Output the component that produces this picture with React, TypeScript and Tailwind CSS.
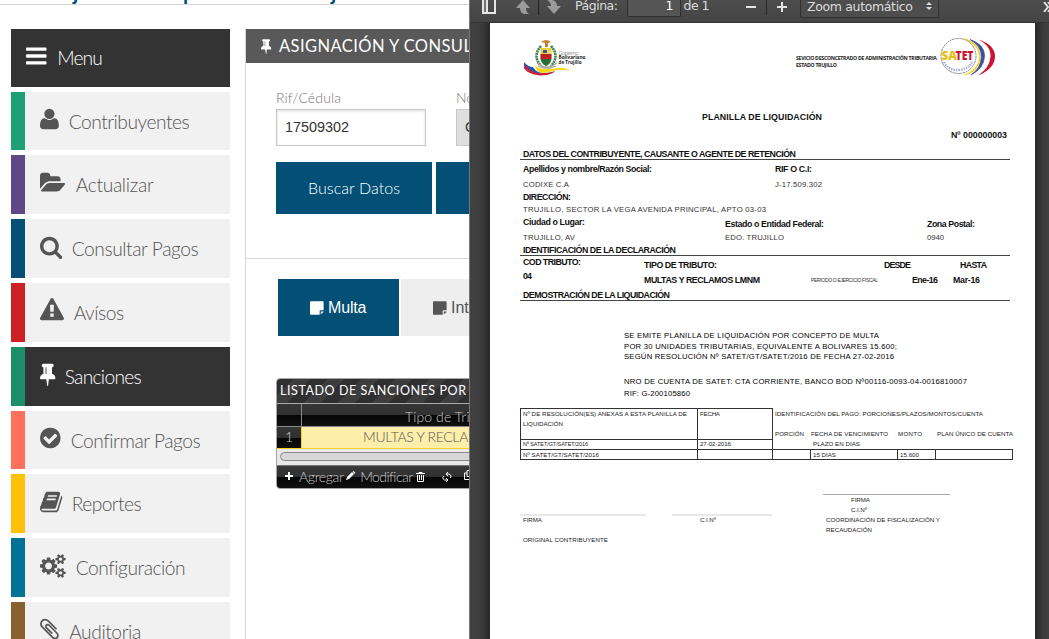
import React, { useLayoutEffect, useRef } from 'react';

/** Text run whose glyphs are spread to fill a given advance width, like a PDF text layer does. */
function Fit({ w, className = '', children }: { w: number; className?: string; children: string }) {
  const ref = useRef<HTMLSpanElement>(null);
  useLayoutEffect(() => {
    const el = ref.current;
    if (!el) return;
    el.style.letterSpacing = '0.001px';
    const natural = el.getBoundingClientRect().width;
    el.style.letterSpacing = `${(w - natural) / Math.max(1, children.length - 1)}px`;
  }, [w, children]);
  return (
    <span ref={ref} className={`block shrink-0 whitespace-pre ${className}`}>
      {children}
    </span>
  );
}

const P = {
  bars: 'M1664 1344v128q0 26-19 45t-45 19h-1408q-26 0-45-19t-19-45v-128q0-26 19-45t45-19h1408q26 0 45 19t19 45zm0-512v128q0 26-19 45t-45 19h-1408q-26 0-45-19t-19-45v-128q0-26 19-45t45-19h1408q26 0 45 19t19 45zm0-512v128q0 26-19 45t-45 19h-1408q-26 0-45-19t-19-45v-128q0-26 19-45t45-19h1408q26 0 45 19t19 45z',
  user: 'M1600 1405q0 120-73 189.5t-194 69.5h-874q-121 0-194-69.5t-73-189.5q0-53 3.5-103.5t14-109 26.5-108.5 43-97.5 62-81 85.5-53.5 111.5-20q9 0 42 21.5t74.5 48 108 48 133.5 21.5 133.5-21.5 108-48 74.5-48 42-21.5q61 0 111.5 20t85.5 53.5 62 81 43 97.5 26.5 108.5 14 109 3.5 103.5zm-320-893q0 159-112.5 271.5t-271.5 112.5-271.5-112.5-112.5-271.5 112.5-271.5 271.5-112.5 271.5 112.5 112.5 271.5z',
  folder: 'M1879 952q0 31-31 66l-336 396q-43 51-120.5 86.5t-143.5 35.5h-1088q-34 0-60.5-13t-26.5-43q0-31 31-66l336-396q43-51 120.5-86.5t143.5-35.5h1088q34 0 60.5 13t26.5 43zm-343-344v160h-832q-94 0-197 47.5t-164 119.5l-337 396-5 6q0-4-.5-12.5t-.5-12.5v-960q0-92 66-158t158-66h320q92 0 158 66t66 158v32h544q92 0 158 66t66 158z',
  search: 'M1216 832q0-185-131.5-316.5t-316.5-131.5-316.5 131.5-131.5 316.5 131.5 316.5 316.5 131.5 316.5-131.5 131.5-316.5zm512 832q0 52-38 90t-90 38q-54 0-90-38l-343-342q-179 124-399 124-143 0-273.5-55.5t-225-150-150-225-55.5-273.5 55.5-273.5 150-225 225-150 273.5-55.5 273.5 55.5 225 150 150 225 55.5 273.5q0 220-124 399l343 343q37 37 37 90z',
  warning: 'M1024 1375v-190q0-14-9.5-23.5t-22.5-9.5h-192q-13 0-22.5 9.5t-9.5 23.5v190q0 14 9.5 23.5t22.5 9.5h192q13 0 22.5-9.5t9.5-23.5zm-2-374l18-459q0-12-10-19-13-11-24-11h-220q-11 0-24 11-10 7-10 21l17 457q0 10 10 16.5t24 6.5h185q14 0 23.5-6.5t10.5-16.5zm-14-934l768 1408q35 63-2 126-17 29-46.5 46t-63.5 17h-1536q-34 0-63.5-17t-46.5-46q-37-63-2-126l768-1408q17-31 47-49t65-18 65 18 47 49z',
  pin: 'M800 864v-448q0-14-9-23t-23-9-23 9-9 23v448q0 14 9 23t23 9 23-9 9-23zm672 352q0 26-19 45t-45 19h-429l-51 483q-2 12-10.5 20.5t-20.5 8.5h-1q-27 0-32-27l-76-485h-404q-26 0-45-19t-19-45q0-123 78.5-221.5t177.5-98.5v-512q-52 0-90-38t-38-90 38-90 90-38h640q52 0 90 38t38 90-38 90-90 38v512q99 0 177.5 98.5t78.5 221.5z',
  check: 'M1412 734q0-28-18-46l-91-90q-19-19-45-19t-45 19l-408 407-226-226q-19-19-45-19t-45 19l-91 90q-18 18-18 46 0 27 18 45l362 362q19 19 45 19 27 0 46-19l543-543q18-18 18-45zm252 162q0 209-103 385.5t-279.5 279.5-385.5 103-385.5-103-279.5-279.5-103-385.5 103-385.5 279.5-279.5 385.5-103 385.5 103 279.5 279.5 103 385.5z',
  book: 'M1703 478q40 57 18 129l-275 906q-19 64-76.5 107.5t-122.5 43.5h-923q-77 0-148.5-53.5t-99.5-131.5q-24-67-2-127 0-4 3-27t4-37q1-8-3-21.5t-3-19.5q2-11 8-21t16.5-23.5 16.5-23.5q23-38 45-91.5t30-91.5q3-10 .5-30t-.5-28q3-11 17-28t17-23q21-36 42-92t25-90q1-9-2.5-32t.5-28q4-13 22-30.5t22-22.5q19-26 42.5-84.5t27.5-96.5q1-8-3-25.5t-2-26.5q2-8 9-18t18-23 17-21q8-12 16.5-30.5t15-35 16-36 19.5-32 26.5-23.5 36-11.5 47.5 5.5l-1 3q38-9 51-9h761q74 0 114 56t18 130l-274 906q-36 119-71.5 153.5t-128.5 34.5h-869q-27 0-38 15-11 16-1 43 24 70 144 70h923q29 0 56-15.5t35-41.5l300-987q7-22 5-57 38 15 59 43zm-1064 2q-4 13 2 22.5t20 9.5h608q13 0 25.5-9.5t16.5-22.5l21-64q4-13-2-22.5t-20-9.5h-608q-13 0-25.5 9.5t-16.5 22.5zm-83 256q-4 13 2 22.5t20 9.5h608q13 0 25.5-9.5t16.5-22.5l21-64q4-13-2-22.5t-20-9.5h-608q-13 0-25.5 9.5t-16.5 22.5z',
  cogs: 'M896 896q0-106-75-181t-181-75-181 75-75 181 75 181 181 75 181-75 75-181zm768 512q0-52-38-90t-90-38-90 38-38 90q0 53 37.5 90.5t90.5 37.5 90.5-37.5 37.5-90.5zm0-1024q0-52-38-90t-90-38-90 38-38 90q0 53 37.5 90.5t90.5 37.5 90.5-37.5 37.5-90.5zm-384 421v185q0 10-7 19.5t-16 10.5l-155 24q-11 35-32 76 34 48 90 115 7 10 7 20 0 12-7 19-23 30-82.5 89.5t-78.5 59.5q-11 0-21-7l-115-90q-37 19-77 31-11 108-23 155-7 24-30 24h-186q-11 0-20-7.5t-10-17.5l-23-153q-34-10-75-31l-118 89q-7 7-20 7-11 0-21-8-144-133-144-160 0-9 7-19 10-14 41-53t47-61q-23-44-35-82l-152-24q-10-1-17-9.5t-7-19.5v-185q0-10 7-19.5t16-10.5l155-24q11-35 32-76-34-48-90-115-7-11-7-20 0-12 7-20 22-30 82-89t79-59q11 0 21 7l115 90q34-18 77-32 11-108 23-154 7-24 30-24h186q11 0 20 7.5t10 17.5l23 153q34 10 75 31l118-89q8-7 20-7 11 0 21 8 144 133 144 160 0 9-7 19-12 16-42 54t-45 60q23 48 34 82l152 23q10 2 17 10.5t7 19.5zm640 533v140q0 16-149 31-12 27-30 52 51 113 51 138 0 4-4 7-122 71-124 71-8 0-46-47t-52-68q-20 2-30 2t-30-2q-14 21-52 68t-46 47q-2 0-124-71-4-3-4-7 0-25 51-138-18-25-30-52-149-15-149-31v-140q0-16 149-31 13-29 30-52-51-113-51-138 0-4 4-7 4-2 35-20t59-34 30-16q8 0 46 46.5t52 67.5q20-2 30-2t30 2q51-71 92-112l6-2q4 0 124 70 4 3 4 7 0 25-51 138 17 23 30 52 149 15 149 31zm0-1024v140q0 16-149 31-12 27-30 52 51 113 51 138 0 4-4 7-122 71-124 71-8 0-46-47t-52-68q-20 2-30 2t-30-2q-14 21-52 68t-46 47q-2 0-124-71-4-3-4-7 0-25 51-138-18-25-30-52-149-15-149-31v-140q0-16 149-31 13-29 30-52-51-113-51-138 0-4 4-7 4-2 35-20t59-34 30-16q8 0 46 46.5t52 67.5q20-2 30-2t30 2q51-71 92-112l6-2q4 0 124 70 4 3 4 7 0 25-51 138 17 23 30 52 149 15 149 31z',
  clip: 'M1596 1385q0 117-79 196t-196 79q-135 0-235-100l-777-776q-113-115-113-271 0-159 110-270t269-111q158 0 273 113l605 606q10 10 10 22 0 16-30.5 46.5t-46.5 30.5q-13 0-23-10l-606-607q-79-77-181-77-106 0-179 75t-73 181q0 105 76 181l776 777q63 63 145 63 64 0 106-42t42-106q0-82-63-145l-581-581q-26-24-60-24-29 0-48 19t-19 48q0 32 25 59l410 410q10 10 10 22 0 16-31 47t-47 31q-12 0-22-10l-410-410q-63-61-63-149 0-82 57-139t139-57q88 0 149 63l581 581q100 98 100 235z',
  note: 'M1216 1248v416h-992q-40 0-68-28t-28-68v-1344q0-40 28-68t68-28h1344q40 0 68 28t28 68v928h-352q-40 0-68 28t-28 68zm128 32h316q-10 54-46 92l-178 178q-34 36-92 46z',
};

function Glyph({ d, x = 0, className }: { d: string; x?: number; className: string }) {
  return (
    <svg viewBox={`${x} 0 1920 1792`} className={`shrink-0 overflow-visible fill-current ${className}`}>
      <path d={d} />
    </svg>
  );
}

const items = [
  { label: 'Contribuyentes', w: 121, icon: P.user, x: 192, bar: 'bg-[#1f9f75]', pad: 'ml-[3px]' },
  { label: 'Actualizar', w: 78, icon: P.folder, x: 0, bar: 'bg-[#5e4886]', pad: 'ml-[10px]' },
  { label: 'Consultar Pagos', w: 127, icon: P.search, x: 64, bar: 'bg-[#034f75]', pad: 'ml-[6px]' },
  { label: 'Avísos', w: 50.5, icon: P.warning, x: 0, bar: 'bg-[#cc2024]', pad: 'ml-[8px]' },
  { label: 'Sanciones', w: 77, icon: P.pin, x: 320, bar: 'bg-[#1c8e69]', pad: '-ml-[1px]', active: true },
  { label: 'Confirmar Pagos', w: 130, icon: P.check, x: 128, bar: 'bg-[#ff715b]', pad: 'ml-[5px]' },
  { label: 'Reportes', w: 70, icon: P.book, x: 64, bar: 'bg-[#ffc107]', pad: 'ml-[6px]' },
  { label: 'Configuración', w: 110, icon: P.cogs, x: 0, bar: 'bg-[#007298]', pad: 'ml-[10px]' },
  { label: 'Auditoria', w: 72, icon: P.clip, x: 192, bar: 'bg-[#896030]', pad: 'ml-[3.500px]' },
];

function Sidebar() {
  return (
    <nav className="flex w-[219px] shrink-0 flex-col gap-[5px] text-[19.2px] leading-none font-light">
      <div className="flex h-[58px] shrink-0 items-center bg-[#333333] pl-[15px] text-white">
        <Glyph d={P.bars} x={128} className="mb-1 h-6 w-[25.7px]" />
        <Fit w={45.5} className="mt-px ml-[5.5px]">Menu</Fit>
      </div>
      {items.map((it) => (
        <div
          key={it.label}
          className={`flex h-[58.8px] shrink-0 items-center ${it.active ? 'bg-[#333333] text-white' : 'bg-[#f1f1f1] text-[#555]'}`}
        >
          <i className={`h-full w-[14px] ${it.bar}`} />
          <Glyph d={it.icon} x={it.x} className="mb-1 ml-[15px] h-6 w-[25.7px]" />
          <Fit w={it.w} className={`mt-[.5px] ${it.pad}`}>{it.label}</Fit>
        </div>
      ))}
    </nav>
  );
}

function SanctionsGrid() {
  return (
    <div className="mt-[42px] ml-[30px] flex h-[111px] w-[400px] flex-col overflow-hidden rounded-[4px] border border-[#a5a5a5] bg-white font-light">
      <div className="flex h-[25px] shrink-0 items-center border-b border-[#aaa] bg-[repeating-linear-gradient(135deg,#2f2f2f_0,#2f2f2f_12px,#3d3d3d_12px,#3d3d3d_24px)] pt-px pl-[3px] text-[12.5px] leading-none font-normal text-white">
        <Fit w={186}>LISTADO DE SANCIONES POR</Fit>
      </div>
      <div className="flex h-[23px] shrink-0 border-b border-[#888] bg-[linear-gradient(#363636_0,#303030_50%,#060606_52%,#111_100%)] text-[14px] leading-none text-[#ccc]">
        <div className="w-[25px] shrink-0 border-r border-[#888]" />
        <div className="flex items-center pt-[5px] pl-[103px]">
          <Fit w={93}>Tipo de Tributo</Fit>
        </div>
      </div>
      <div className="flex h-[22px] shrink-0 border-b border-[#f8d21c] text-[14px] leading-none">
        <div className="flex w-[24px] shrink-0 items-center justify-center bg-[linear-gradient(#363636_0,#303030_50%,#060606_52%,#111_100%)] text-[#ccc]">1</div>
        <div className="flex flex-1 items-center border-l border-[#f8d21c] bg-[#fdeea9] pl-[61px] text-[#555]">
          <Fit w={181}>MULTAS Y RECLAMOS LMNM</Fit>
        </div>
      </div>
      <div className="h-[16px] shrink-0 bg-[#e9e9e9] pt-[3px] pl-[3px]">
        <div className="h-[9px] w-[380px] rounded-full border border-[#888] bg-[#d7d7d7]" />
      </div>
      <div className="flex flex-1 items-center border-t border-[#777] bg-[linear-gradient(#3a3a3a_0,#303030_48%,#060606_52%,#111_100%)] pl-[8px] text-[14px] leading-none text-[#ccc]">
        <svg viewBox="0 0 8 8" className="mb-px h-2 w-2 fill-white"><path d="M3 0h2v3h3v2H5v3H3V5H0V3h3z" /></svg>
        <Fit w={45} className="ml-[6px]">Agregar</Fit>
        <svg viewBox="0 0 10 10" className="mb-[2px] ml-[2.500px] h-[10px] w-[10px] fill-white"><path d="M0 9l1-3 5-5 2 2-5 5zM6.6.8L7.5 0l2 2-.8.8z" /></svg>
        <Fit w={53} className="ml-[4px]">Modificar</Fit>
        <svg viewBox="0 0 10 10" className="ml-[3px] h-[10px] w-[10px] fill-none stroke-white"><path d="M0 1.5h9M3 1V.5h3V1M1.500 3v6.500h6V3M3.500 3v5M5.500 3v5" /></svg>
        <svg viewBox="0 0 10 10" className="ml-[16px] h-[10px] w-[10px] fill-none stroke-white"><path d="M4 2h3q2 .5 2 3l-1 1M6 0L4 2l2 2M5.500 8h-3Q1 7.500.8 5.500L2 4M4 10l2-2-2-2" /></svg>
        <svg viewBox="0 0 10 10" className="mb-[3px] ml-[12px] h-[10px] w-[10px] fill-none stroke-white"><path d="M3 .5h6.500v6H3zM3 3H.5v6.500h6V7" /></svg>
      </div>
    </div>
  );
}

function MainPanel() {
  return (
    <main className="ml-[15px] flex w-[500px] shrink-0 flex-col border-l border-[#d8d8d8]">
      <div className="flex h-[34px] shrink-0 items-center bg-[#595959] pt-px pl-[15px] text-[16.5px] leading-none text-white">
        <Glyph d={P.pin} x={320} className="h-[16px] w-[17px]" />
        <Fit w={239} className="ml-px">ASIGNACIÓN Y CONSULTA DE</Fit>
      </div>
      <div className="mt-[27px] flex gap-[30px] pl-[30px]">
        <div className="flex w-[150px] flex-col text-[14px] leading-4 font-light text-[#777]">
          <Fit w={65} className="h-4 self-start">Rif/Cédula</Fit>
          <div className="mt-[3px] flex h-[37px] items-center border border-[#c8c8c8] pl-[8px] font-['Liberation_Sans',sans-serif] text-[14.4px] font-normal text-[#333] shadow-[inset_0_1px_3px_#ddd]">
            17509302
          </div>
        </div>
        <div className="flex w-[150px] flex-col text-[14px] leading-4 font-light text-[#777]">
          <Fit w={48} className="h-4 self-start">Nombre</Fit>
          <div className="mt-[3px] flex h-[37px] items-center border border-[#c8c8c8] bg-[#dedede] pl-[8px] font-['Liberation_Sans',sans-serif] text-[14.4px] font-normal text-[#333]">
            CODIXE C.A
          </div>
        </div>
      </div>
      <div className="mt-[16px] flex gap-1 pl-[30px] text-[16px] leading-none font-light text-white">
        <div className="flex h-[52px] w-[156px] items-center justify-center bg-[#034f75]">
          <Fit w={92}>Buscar Datos</Fit>
        </div>
        <div className="h-[52px] w-[156px] bg-[#034f75]" />
      </div>
      <div className="mt-[44px] h-px shrink-0 bg-[#d8d8d8]" />
      <div className="mt-[20px] flex h-[57px] shrink-0 gap-[2px] pl-8 font-['Liberation_Sans',sans-serif] text-[16px] leading-none">
        <div className="flex w-[121px] items-center bg-[#034f75] pt-px pl-[32px] text-white">
          <Glyph d={P.note} x={128} className="h-[16px] w-[17px]" />
          <Fit w={38.5} className="ml-px">Multa</Fit>
        </div>
        <div className="flex w-[140px] items-center bg-[#eeeeee] pt-px pl-[32px] text-[#555]">
          <Glyph d={P.note} x={128} className="h-[16px] w-[17px]" />
          <span className="ml-px">Interés</span>
        </div>
      </div>
      <SanctionsGrid />
    </main>
  );
}

function ShieldLogo() {
  return (
    <svg viewBox="0 0 64 40" className="h-10 w-16">
      <path d="M18 7Q9 17 18 27M28 7q9 10 0 20" className="fill-none stroke-[#2f7d4a]" strokeWidth="2.600" strokeDasharray="2 .7" />
      <path d="M18 3q5-4 10 0l-3 1v4h-3V4z" className="fill-[#c98232]" />
      <path d="M17.500 9h11v9q0 7-5.500 9-5.500-2-5.500-9z" className="fill-[#e8cf35]" />
      <path d="M23 8l5 5v4h-5z" className="fill-[#f0dd55]" />
      <path d="M17.500 15h11v5h-11z" className="fill-[#bb2025]" />
      <path d="M17.500 20h11q-1 5-5.500 7-4.500-2-5.500-7z" className="fill-[#2c6b3a]" />
      <path d="M20 11h4v3h-4z" className="fill-[#3a56a5]" />
      <path d="M14 24l7 4h6l7-4M15 27l6 2h6l6-2" className="fill-none stroke-[#a8a8a8]" strokeWidth="1.300" />
      <path d="M12 26q3 4 10 4 7 0 13-1 7-1 12 3-6-2-13-1-7 2-13 3-8 0-9-8z" className="fill-[#f8d417]" />
      <path d="M1 23q4 5 9 5 4 7 13 6 5 0 9-2-4 4-13 4Q6 35 1 29z" className="fill-[#2b55a5]" />
      <path d="M1 25q4 6 11 8.500 9 2 20-1-6 4-15 4Q4 35 1 29z" className="fill-[#cf2038]" />
      <g className="font-['Open_Sans',sans-serif] text-[5.500px]">
        <text x="35.500" y="15.500" textLength="20" className="fill-[#999]">Gobierno</text>
        <text x="35.500" y="20.300" textLength="27" lengthAdjust="spacingAndGlyphs" className="fill-[#222] font-bold">Bolivariano</text>
        <text x="35.500" y="25.300" textLength="23" lengthAdjust="spacingAndGlyphs" className="fill-[#222] font-bold">de Trujillo</text>
      </g>
    </svg>
  );
}

function SatetLogo() {
  return (
    <svg viewBox="0 0 57 40" className="h-10 w-[57px]">
      <path d="M22 1.500a18.500 18.500 0 1 1 0 37q17-6 17-18.500T22 1.500z" className="fill-[#f6d512]" />
      <path d="M30 2.500q15 5 14.500 17T31 38q10-7 10.300-18T30 2.500z" className="fill-[#3d4fa0] stroke-[#3d4fa0]" strokeWidth=".7" />
      <path d="M38 2.500q17 5 17 17T38 38.500q12-8 12.500-19T38 2.500z" className="fill-[#c9152f]" />
      <circle cx="18.500" cy="19" r="17.500" className="fill-white stroke-[#777]" strokeWidth=".9" strokeDasharray="2 .6" />
      <path d="M4 25q5 9 15 8t13-8" className="fill-none stroke-[#aab2da]" strokeWidth="2.500" strokeDasharray="1.500 1" />
      <g className="font-['Open_Sans',sans-serif] text-[13px] font-extrabold">
        <text x="1.500" y="23" textLength="15.500" lengthAdjust="spacingAndGlyphs" className="fill-[#e9be12]">SA</text>
        <text x="15.500" y="23" textLength="18" lengthAdjust="spacingAndGlyphs" className="fill-[#c9152f]">TET</text>
      </g>
    </svg>
  );
}

const bold = 'font-bold text-[#111] text-[8.8px]';
const thin = 'text-[#333] text-[7.7px]';
const note = 'text-black text-[7.7px]';
const tiny = 'text-[#222] text-[6.2px]';

function Receipt() {
  return (
    <article className="mx-auto flex h-[640px] w-[545px] shrink-0 flex-col bg-white pr-[25px] pl-[30px] font-['Liberation_Sans',sans-serif] leading-none shadow-[0_0_9px_4px_rgba(0,0,0,.45)]">
      <header className="flex h-[84px] shrink-0 pt-[14px]">
        <div className="ml-[3px] w-[273px] pt-[2px]"><ShieldLogo /></div>
        <div className="flex w-[144px] shrink-0 flex-col items-start pt-[19px] font-['Open_Sans',sans-serif] text-[5.200px] font-bold text-[#222]">
          <Fit w={141} className="h-[7px]">SEVICIO DESCONCETRADO DE ADMINISTRACIÓN TRIBUTARIA</Fit>
          <Fit w={41}>ESTADO TRUJILLO</Fit>
        </div>
        <SatetLogo />
      </header>
      <div className="flex h-[18px] shrink-0 items-center pt-[2px] pl-[182px]"><Fit w={120} className={bold}>PLANILLA DE LIQUIDACIÓN</Fit></div>
      <div className="flex h-[18px] shrink-0 items-center pt-[2px] pl-[431px]"><Fit w={56} className={bold}>Nº 000000003</Fit></div>
      <div className="mt-[5px] flex h-[12px] shrink-0 items-center border-b border-[#444] pt-px pl-[3px]"><Fit w={273} className={bold}>DATOS DEL CONTRIBUYENTE, CAUSANTE O AGENTE DE RETENCIÓN</Fit></div>
      <div className="flex h-[17px] shrink-0 items-center pt-px pl-[3px]">
        <div className="flex w-[252px]"><Fit w={129} className={bold}>Apellidos y nombre/Razón Social:</Fit></div>
        <Fit w={37} className={bold}>RIF O C.I:</Fit>
      </div>
      <div className="flex h-[15px] shrink-0 items-center pl-[3px]">
        <div className="flex w-[252px]"><Fit w={46} className={thin}>CODIXE C.A</Fit></div>
        <Fit w={47} className={thin}>J-17.509.302</Fit>
      </div>
      <div className="flex h-[10px] shrink-0 items-center pl-[3px]"><Fit w={48} className={bold}>DIRECCIÓN:</Fit></div>
      <div className="flex h-[15px] shrink-0 items-center pl-[3px]"><Fit w={243} className={thin}>TRUJILLO, SECTOR LA VEGA AVENIDA PRINCIPAL, APTO 03-03</Fit></div>
      <div className="mb-[5px] flex h-[9px] shrink-0 items-center pl-[3px]">
        <div className="mt-[1.500px] flex w-[202px]"><Fit w={62} className={bold}>Ciudad o Lugar:</Fit></div>
        <div className="mt-[5px] flex w-[202px]"><Fit w={99} className={bold}>Estado o Entidad Federal:</Fit></div>
        <Fit w={48} className={`mt-[5px] ${bold}`}>Zona Postal:</Fit>
      </div>
      <div className="flex h-[13px] shrink-0 items-center pl-[3px]">
        <div className="flex w-[202px]"><Fit w={52} className={thin}>TRUJILLO, AV</Fit></div>
        <div className="flex w-[202px]"><Fit w={59} className={thin}>EDO. TRUJILLO</Fit></div>
        <Fit w={17} className={thin}>0940</Fit>
      </div>
      <div className="flex h-[12px] shrink-0 items-center border-b border-[#444] pt-px pl-[3px]"><Fit w={153} className={bold}>IDENTIFICACIÓN DE LA DECLARACIÓN</Fit></div>
      <div className="flex h-[11px] shrink-0 items-center pl-[3px]">
        <div className="mt-px flex w-[121px]"><Fit w={58} className={bold}>COD TRIBUTO:</Fit></div>
        <div className="mt-[7px] flex w-[240px]"><Fit w={73} className={bold}>TIPO DE TRIBUTO:</Fit></div>
        <div className="mt-[7px] flex w-[76px]"><Fit w={27} className={bold}>DESDE</Fit></div>
        <Fit w={27} className={`mt-[7px] ${bold}`}>HASTA</Fit>
      </div>
      <div className="flex h-[18px] shrink-0 items-center pl-[3px]">
        <div className="mt-px flex w-[121px]"><Fit w={9} className={bold}>04</Fit></div>
        <div className="mt-[8px] flex w-[167px]"><Fit w={116} className={bold}>MULTAS Y RECLAMOS LMNM</Fit></div>
        <div className="mt-[8px] flex w-[101px]"><Fit w={67} className="text-[5px] text-[#333]">PERIODO O EJERCICIO FISCAL</Fit></div>
        <div className="mt-[8px] flex w-[41px]"><Fit w={26} className={bold}>Ene-16</Fit></div>
        <Fit w={27} className={`mt-[8px] ${bold}`}>Mar-16</Fit>
      </div>
      <div className="mt-[4px] flex h-[12px] shrink-0 items-center border-b border-[#444] pt-px pl-[3px]"><Fit w={147} className={bold}>DEMOSTRACIÓN DE LA LIQUIDACIÓN</Fit></div>
      <div className="mt-[29px] flex shrink-0 flex-col pl-[104px]">
        <div className="flex h-[11px] items-center"><Fit w={255} className={note}>SE EMITE PLANILLA DE LIQUIDACIÓN POR CONCEPTO DE MULTA</Fit></div>
        <div className="flex h-[10px] items-center pt-px"><Fit w={273} className={note}>POR 30 UNIDADES TRIBUTARIAS, EQUIVALENTE A BOLIVARES 15.600;</Fit></div>
        <div className="flex h-[10px] items-center pt-px"><Fit w={270} className={note}>SEGÚN RESOLUCIÓN Nº SATET/GT/SATET/2016 DE FECHA 27-02-2016</Fit></div>
        <div className="mt-[15px] flex h-[11px] items-center"><Fit w={343} className={note}>NRO DE CUENTA DE SATET: CTA CORRIENTE, BANCO BOD Nº00116-0093-04-0016810007</Fit></div>
        <div className="flex h-[13px] items-center"><Fit w={66} className={note}>RIF: G-200105860</Fit></div>
      </div>
      <div className="mt-[8px] grid w-[493px] shrink-0 grid-cols-[177px_76px_240px] grid-rows-[31px_10px_11px]">
        <div className="flex flex-col items-start gap-[4px] border-t border-l border-[#333] pt-[2px] pl-[2px]">
          <Fit w={164} className={tiny}>Nº DE RESOLUCIÓN(ES) ANEXAS A ESTA PLANILLA DE</Fit>
          <Fit w={40} className={tiny}>LIQUIDACIÓN</Fit>
        </div>
        <div className="flex items-start border-x border-t border-[#333] pt-[2px] pl-[2px]"><Fit w={20} className={tiny}>FECHA</Fit></div>
        <div className="flex flex-col items-start pt-[3px] pl-[2px]">
          <Fit w={208} className={tiny}>IDENTIFICACIÓN DEL PAGO: PORCIONES/PLAZOS/MONTOS/CUENTA</Fit>
          <div className="mt-[14px] flex">
            <div className="flex w-[36px] shrink-0"><Fit w={29} className={tiny}>PORCIÓN</Fit></div>
            <div className="flex w-[87px] shrink-0"><Fit w={77} className={tiny}>FECHA DE VENCIMIENTO</Fit></div>
            <div className="flex w-[39px] shrink-0"><Fit w={24} className={tiny}>MONTO</Fit></div>
            <Fit w={76} className={tiny}>PLAN ÚNICO DE CUENTA</Fit>
          </div>
        </div>
        <div className="flex items-center border-t border-l border-[#333] pl-[2px]"><Fit w={65} className="text-[5.500px] text-[#222]">Nº SATET/GT/SATET/2016</Fit></div>
        <div className="flex items-center border-x border-t border-[#333] pl-[2px]"><Fit w={31} className={tiny}>27-02-2016</Fit></div>
        <div className="flex items-center pl-[40px]"><Fit w={47} className={tiny}>PLAZO EN DIAS</Fit></div>
        <div className="flex items-center border-y border-l border-[#333] pt-px pl-[2px]"><Fit w={76} className={tiny}>Nº SATET/GT/SATET/2016</Fit></div>
        <div className="border border-[#333]" />
        <div className="grid grid-cols-[37px_88px_38px_77px] border-y border-r border-[#333]">
          <div />
          <div className="flex items-center border-x border-[#333] pt-px pl-[2px]"><Fit w={23} className={tiny}>15 DIAS</Fit></div>
          <div className="flex items-center border-r border-[#333] pt-px pl-[2px]"><Fit w={19} className={tiny}>15.600</Fit></div>
        </div>
      </div>
      <footer className="flex shrink-0">
        <div className="mt-[54px] w-[152px]">
          <div className="h-[2px] w-[126px] bg-[#e8e8e8]" />
          <div className="flex h-[8px] items-center pl-[3px]"><Fit w={19} className={tiny}>FIRMA</Fit></div>
          <div className="mt-[12px] flex h-[8px] items-center pl-[3px]"><Fit w={85} className={tiny}>ORIGINAL CONTRIBUYENTE</Fit></div>
        </div>
        <div className="mt-[54px] w-[151px]">
          <div className="h-[2px] w-[100px] bg-[#e8e8e8]" />
          <div className="flex h-[8px] items-center pl-[28px]"><Fit w={16} className={tiny}>C.I.Nº</Fit></div>
        </div>
        <div className="mt-[34px]">
          <div className="h-px w-[127px] bg-[#aaa]" />
          <div className="flex h-[10px] items-center pl-[28px]"><Fit w={19} className={tiny}>FIRMA</Fit></div>
          <div className="flex h-[10px] items-center pl-[28px]"><Fit w={16} className={tiny}>C.I.Nº</Fit></div>
          <div className="flex h-[10px] items-center pl-[3px]"><Fit w={114} className={tiny}>COORDINACIÓN DE FISCALIZACIÓN Y</Fit></div>
          <div className="flex h-[10px] items-center pl-[3px]"><Fit w={46} className={tiny}>RECAUDACIÓN</Fit></div>
        </div>
      </footer>
    </article>
  );
}

function Viewer() {
  return (
    <section className="flex h-full flex-1 flex-col overflow-hidden border-l border-[#777] bg-[#404040]">
      <div className="z-10 flex h-[23px] shrink-0 items-start overflow-hidden border-b border-[#333] bg-[linear-gradient(#4d4d4d,#444)] pl-[12px] font-['DejaVu_Sans',sans-serif] text-[12.500px] leading-none text-[#dcdcdc]">
        <svg viewBox="0 0 14 14" className="h-[14px] w-[14px] shrink-0"><path d="M1 0v13h12V0M5 0v13" className="fill-none stroke-[#e4e4e4]" strokeWidth="2" /><path d="M3 0v12" className="stroke-[#999]" strokeWidth="1" /></svg>
        <svg viewBox="0 0 14 14" className="ml-[20px] h-[14px] w-[14px] shrink-0 fill-[#9b9b9b]"><path d="M0 8L7 0l7 8h-4q0 4 3 6H8q-4-1-4-6z" /></svg>
        <i className="ml-[8px] h-[15px] w-px shrink-0 bg-[#222]" />
        <svg viewBox="0 0 14 14" className="ml-[8px] h-[14px] w-[14px] shrink-0 fill-[#9b9b9b]"><path d="M0 0h5q5 1 5 6h4l-7 8-7-8h4q0-4-4-6z" /></svg>
        <Fit w={43} className="ml-[14px]">Página:</Fit>
        <div className="ml-[9px] flex h-[17px] w-[54px] shrink-0 justify-end rounded-b-[2px] border border-t-0 border-[#2d2d2d] bg-[#555] pr-[6px] text-white">1</div>
        <Fit w={26} className="ml-[3px]">de 1</Fit>
        <i className="mt-[6px] ml-[37px] h-[2px] w-[10px] shrink-0 bg-[#e4e4e4]" />
        <i className="ml-[10px] h-[15px] w-px shrink-0 bg-[#2a2a2a]" />
        <svg viewBox="0 0 10 10" className="mt-[2px] ml-[10px] h-[10px] w-[10px] shrink-0"><path d="M5 0v10M0 5h10" className="stroke-[#e4e4e4]" strokeWidth="2" /></svg>
        <div className="ml-[13px] flex h-[18px] w-[139px] shrink-0 rounded-b-[2px] border border-t-0 border-[#303030] bg-[#4d4d4d] pt-px pl-[6px]">
          <Fit w={106}>Zoom automático</Fit>
          <svg viewBox="0 0 6 8" className="mt-px ml-[13px] h-2 w-[6px] fill-[#ddd]"><path d="M0 3l3-3 3 3zM0 5h6L3 8z" /></svg>
        </div>
        <svg viewBox="0 0 10 10" className="mt-[2px] ml-[104px] h-[10px] w-[10px] shrink-0"><path d="M1 0l4 5-4 5M5 0l4 5-4 5" className="fill-none stroke-[#e4e4e4]" strokeWidth="2" /></svg>
      </div>
      <div className="flex flex-1 overflow-hidden pr-[14px] pl-[20px]">
        <Receipt />
      </div>
    </section>
  );
}

export default function App() {
  return (
    <div className="flex h-[639px] w-[1049px] overflow-hidden bg-white font-['Lato',sans-serif]">
      <div className="flex w-[469px] shrink-0 flex-col overflow-hidden">
        <div className="flex h-[4px] shrink-0 items-end overflow-hidden pb-[2px] pl-[73px] text-[21px] leading-[21px] font-bold text-[#034f75]">
          <span className="w-[110px]">j</span>
          <span className="w-[148px]">p</span>
          <span>j</span>
        </div>
        <div className="h-px shrink-0 bg-[#d8d8d8]" />
        <div className="mt-[23.600px] flex flex-1 pl-[11px]">
          <Sidebar />
          <MainPanel />
        </div>
      </div>
      <Viewer />
    </div>
  );
}
